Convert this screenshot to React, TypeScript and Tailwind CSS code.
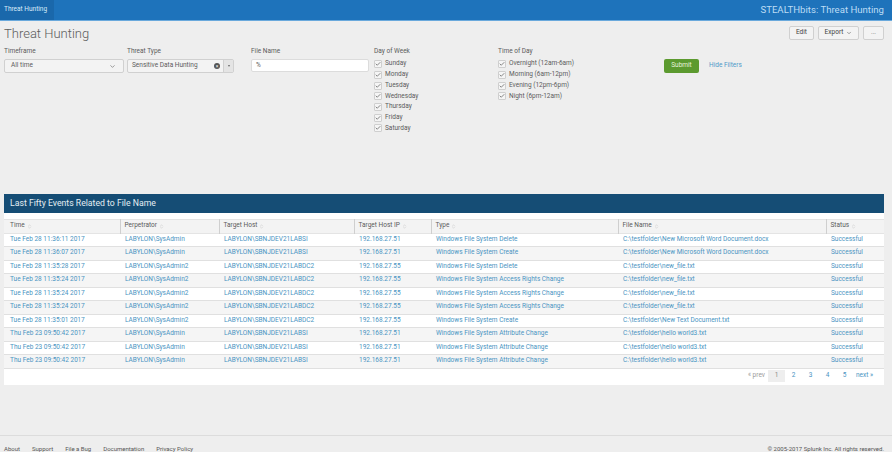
import React from 'react';
import { Check, ChevronDown, ChevronsUpDown } from 'lucide-react';

const rows = [
  ['Tue Feb 28 11:36:11 2017', 'LABYLON\\SysAdmin', 'LABYLON\\SBNJDEV21LABSI', '192.168.27.51', 'Windows File System Delete', 'C:\\testfolder\\New Microsoft Word Document.docx'],
  ['Tue Feb 28 11:36:07 2017', 'LABYLON\\SysAdmin', 'LABYLON\\SBNJDEV21LABSI', '192.168.27.51', 'Windows File System Create', 'C:\\testfolder\\New Microsoft Word Document.docx'],
  ['Tue Feb 28 11:35:28 2017', 'LABYLON\\SysAdmin2', 'LABYLON\\SBNJDEV21LABDC2', '192.168.27.55', 'Windows File System Delete', 'C:\\testfolder\\new_file.txt'],
  ['Tue Feb 28 11:35:24 2017', 'LABYLON\\SysAdmin2', 'LABYLON\\SBNJDEV21LABDC2', '192.168.27.55', 'Windows File System Access Rights Change', 'C:\\testfolder\\new_file.txt'],
  ['Tue Feb 28 11:35:24 2017', 'LABYLON\\SysAdmin2', 'LABYLON\\SBNJDEV21LABDC2', '192.168.27.55', 'Windows File System Access Rights Change', 'C:\\testfolder\\new_file.txt'],
  ['Tue Feb 28 11:35:24 2017', 'LABYLON\\SysAdmin2', 'LABYLON\\SBNJDEV21LABDC2', '192.168.27.55', 'Windows File System Access Rights Change', 'C:\\testfolder\\new_file.txt'],
  ['Tue Feb 28 11:35:01 2017', 'LABYLON\\SysAdmin2', 'LABYLON\\SBNJDEV21LABDC2', '192.168.27.55', 'Windows File System Create', 'C:\\testfolder\\New Text Document.txt'],
  ['Thu Feb 23 09:50:42 2017', 'LABYLON\\SysAdmin', 'LABYLON\\SBNJDEV21LABSI', '192.168.27.51', 'Windows File System Attribute Change', 'C:\\testfolder\\hello world3.txt'],
  ['Thu Feb 23 09:50:42 2017', 'LABYLON\\SysAdmin', 'LABYLON\\SBNJDEV21LABSI', '192.168.27.51', 'Windows File System Attribute Change', 'C:\\testfolder\\hello world3.txt'],
  ['Thu Feb 23 09:50:42 2017', 'LABYLON\\SysAdmin', 'LABYLON\\SBNJDEV21LABSI', '192.168.27.51', 'Windows File System Attribute Change', 'C:\\testfolder\\hello world3.txt'],
];

const columns = [
  { name: 'Time', width: 'w-[116px]' },
  { name: 'Perpetrator', width: 'w-[99px]' },
  { name: 'Target Host', width: 'w-[135px]' },
  { name: 'Target Host IP', width: 'w-[77px]' },
  { name: 'Type', width: 'w-[187px]' },
  { name: 'File Name', width: 'w-[208px]' },
  { name: 'Status', width: 'w-[58px]' },
];

function CheckRow({ label }: { label: string }) {
  return (
    <div className="flex items-center gap-[3px] h-[10.7px]">
      <span className="flex items-center justify-center w-[8px] h-[8px] rounded-[1px] border border-[#cfcfcf] bg-[#f5f5f5]">
        <Check size={6} strokeWidth={2.5} className="text-[#444]" />
      </span>
      <span className="text-[6.5px] text-[#5c5c5c]">{label}</span>
    </div>
  );
}

function Label({ children }: { children: React.ReactNode }) {
  return <div className="text-[6.5px] leading-[9px] text-[#5c5c5c] mb-[3px]">{children}</div>;
}

export default function App() {
  return (
    <div className="w-[892px] h-[452px] overflow-hidden flex flex-col bg-[#eeeeee] antialiased font-['Roboto',sans-serif]">
      {/* App bar */}
      <div className="h-[21px] shrink-0 flex items-stretch justify-between bg-[#1e73bb] border-b border-[#6aa9dc]">
        <div className="w-[54px] pl-[4px] flex items-center bg-[#1a68ab] text-[6.5px] text-[#d9ecfa]">Threat Hunting</div>
        <div className="pr-[8px] flex items-center text-[9.6px] text-[#bcdcf5]">STEALTHbits: Threat Hunting</div>
      </div>

      {/* Title and actions */}
      <div className="h-[23px] shrink-0 pl-[4px] pr-[8px] flex items-start justify-between">
        <h1 className="mt-[4px] text-[13px] leading-[17px] font-light text-[#5c5c5c]">Threat Hunting</h1>
        <div className="mt-[5px] flex gap-[4px]">
          <button className="w-[25px] h-[14px] rounded-[2px] border border-[#d0d0d0] bg-[#f3f3f3] text-[6.5px] text-[#444]">Edit</button>
          <button className="w-[41px] h-[14px] rounded-[2px] border border-[#d0d0d0] bg-[#f3f3f3] text-[6.5px] text-[#444] flex items-center justify-center gap-[3px]">
            Export <ChevronDown size={6} strokeWidth={2} />
          </button>
          <button className="w-[21px] h-[14px] rounded-[2px] border border-[#d0d0d0] bg-[#f3f3f3] text-[6.5px] text-[#888]">...</button>
        </div>
      </div>

      {/* Filters */}
      <div className="h-[150px] shrink-0 pt-[3px] pl-[4px] flex items-start">
        <div className="w-[123px] shrink-0">
          <Label>Timeframe</Label>
          <div className="w-[120px] h-[14px] px-[6px] flex items-center justify-between rounded-[2px] border border-[#d0d0d0] bg-[#f3f3f3] text-[6.5px] text-[#5c5c5c]">
            All time <ChevronDown size={7} strokeWidth={2} className="mr-[1px]" />
          </div>
        </div>
        <div className="w-[124px] shrink-0">
          <Label>Threat Type</Label>
          <div className="w-[107px] h-[14px] flex items-stretch rounded-[2px] border border-[#d0d0d0] bg-[#f3f3f3] text-[6.5px] text-[#5c5c5c]">
            <div className="flex-1 pl-[4px] pr-[3px] flex items-center justify-between">
              Sensitive Data Hunting
              <span className="w-[6px] h-[6px] rounded-full bg-[#555] flex items-center justify-center text-[5px] leading-none text-white">×</span>
            </div>
            <div className="w-[10px] flex items-center justify-center border-l border-[#d0d0d0] bg-[#e4e4e4]">
              <span className="w-0 h-0 border-x-[1.5px] border-x-transparent border-t-[2px] border-t-[#666]" />
            </div>
          </div>
        </div>
        <div className="w-[123px] shrink-0">
          <Label>File Name</Label>
          <div className="w-[118px] h-[13px] px-[4px] flex items-center rounded-[2px] border border-[#dcdcdc] bg-white text-[6.5px] text-[#5c5c5c]">%</div>
        </div>
        <div className="w-[124px] shrink-0">
          <Label>Day of Week</Label>
          {['Sunday', 'Monday', 'Tuesday', 'Wednesday', 'Thursday', 'Friday', 'Saturday'].map((d) => (
            <CheckRow key={d} label={d} />
          ))}
        </div>
        <div className="w-[166px] shrink-0">
          <Label>Time of Day</Label>
          {['Overnight (12am-6am)', 'Morning (6am-12pm)', 'Evening (12pm-6pm)', 'Night (6pm-12am)'].map((d) => (
            <CheckRow key={d} label={d} />
          ))}
        </div>
        <div className="mt-[12px] flex items-center gap-[10px]">
          <button className="w-[35px] h-[14px] rounded-[2px] bg-[#5c9a2f] text-[6.5px] text-[#e8f3dc]">Submit</button>
          <a className="text-[6.5px] text-[#4e9ac9]">Hide Filters</a>
        </div>
      </div>

      {/* Results panel */}
      <div className="ml-[4px] w-[880px] shrink-0">
        <div className="h-[18.5px] pl-[6px] flex items-center bg-[#154d75] text-[8.7px] text-[#e4edf3]">Last Fifty Events Related to File Name</div>
        <div className="bg-white pt-[6px] h-[172px]">
          <table className="w-full table-fixed border-collapse text-[6.5px]">
            <colgroup>
              {columns.map((c) => (
                <col key={c.name} className={c.width} />
              ))}
            </colgroup>
            <thead>
              <tr className="h-[14px] bg-[#f3f3f3] border-y border-[#e4e4e4]">
                {columns.map((c, i) => (
                  <th key={c.name} className={`px-0 font-normal text-left text-[#5c5c5c] ${i > 0 ? 'border-l border-[#cfcfcf]' : ''}`}>
                    <span className={`flex items-center gap-[2px] ${i === 0 ? 'pl-[6px]' : 'pl-[4px]'}`}>
                      {c.name} <ChevronsUpDown size={5} strokeWidth={1.5} className="text-[#aaa]" />
                    </span>
                  </th>
                ))}
              </tr>
            </thead>
            <tbody>
              {rows.map((r, i) => (
                <tr key={i} className={`h-[13.5px] border-b border-[#e0e0e0] text-[#4a94c2] ${i % 2 === 1 ? 'bg-[#f5f5f5]' : 'bg-white'}`}>
                  {[...r, 'Successful'].map((cell, j) => (
                    <td key={j} className={`p-0 whitespace-nowrap ${j === 0 ? 'pl-[6px]' : 'pl-[5px]'}`}>{cell}</td>
                  ))}
                </tr>
              ))}
            </tbody>
          </table>
          <div className="mt-[1px] pr-[11px] h-[12px] flex items-center justify-end text-[6.5px] text-[#4a94c2]">
            <span className="text-[#999] mr-[3px]">« prev</span>
            <span className="w-[17px] h-[12px] flex items-center justify-center bg-[#eeeeee] text-[#888]">1</span>
            <span className="w-[17px] text-center">2</span>
            <span className="w-[17px] text-center">3</span>
            <span className="w-[17px] text-center">4</span>
            <span className="w-[17px] text-center">5</span>
            <span className="ml-[3px]">next »</span>
          </div>
        </div>
      </div>

      {/* Footer */}
      <div className="mt-[50px] flex-1 border-t border-[#dcdcdc] pl-[4px] pr-[8px] pt-[8px] flex items-start justify-between text-[6px] leading-[9px] text-[#555]">
        <div className="flex gap-[12px]">
          <span>About</span>
          <span>Support</span>
          <span>File a Bug</span>
          <span>Documentation</span>
          <span>Privacy Policy</span>
        </div>
        <span>© 2005-2017 Splunk Inc. All rights reserved.</span>
      </div>
    </div>
  );
}
